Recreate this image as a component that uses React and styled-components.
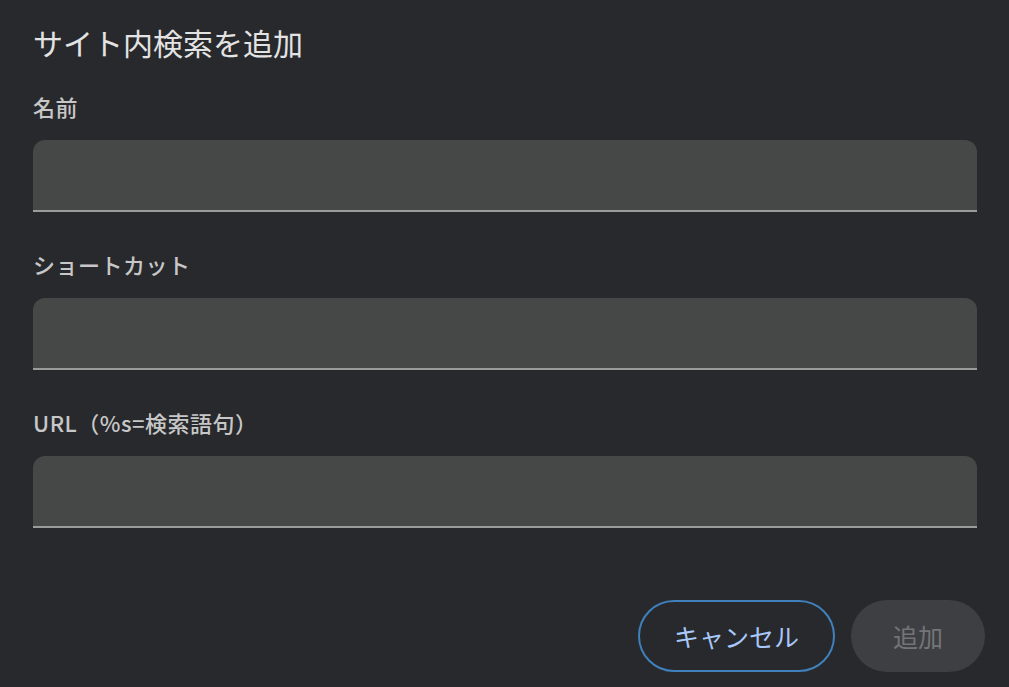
import React from "react";
import styled, { createGlobalStyle } from "styled-components";

const GlobalStyle = createGlobalStyle`
  html, body {
    margin: 0;
    padding: 0;
    background: #28292c;
  }
  body {
    font-family: "Noto Sans CJK JP", "Noto Sans", "Liberation Sans", sans-serif;
  }
`;

const Dialog = styled.div`
  width: 1009px;
  height: 687px;
  box-sizing: border-box;
  padding: 24px 24px 0 33px;
  background: #28292c;
  display: flex;
  flex-direction: column;
`;

const Title = styled.h1`
  margin: 0 0 32px;
  font-size: 30px;
  line-height: 36px;
  font-weight: 400;
  color: #e3e3e3;
`;

const Field = styled.div`
  display: flex;
  flex-direction: column;
  gap: 20px;
  margin-right: 8px;
  margin-bottom: ${(p) => (p.last ? "72px" : "38px")};
`;

const Label = styled.label`
  font-size: 22px;
  line-height: 28px;
  font-weight: 500;
  letter-spacing: 0.5px;
  color: #c7c7c7;
`;

const Input = styled.input`
  height: 72px;
  box-sizing: border-box;
  border: none;
  border-bottom: 2px solid #9a9b9b;
  border-radius: 12px 12px 0 0;
  background: #464847;
  color: #e3e3e3;
  font-size: 22px;
  padding: 0 16px;
  outline: none;
`;

const Footer = styled.div`
  display: flex;
  justify-content: flex-end;
  gap: 16px;
`;

const Button = styled.button`
  height: 72px;
  box-sizing: border-box;
  border-radius: 36px;
  font-family: inherit;
  font-size: 25px;
  font-weight: 400;
  padding: 0 ${(p) => (p.primary ? "41px" : "33px")};
  border: ${(p) => (p.primary ? "none" : "2px solid #3f80bd")};
  background: ${(p) => (p.primary ? "#3e3f42" : "transparent")};
  color: ${(p) => (p.primary ? "#737477" : "#a8c7fa")};
  min-width: ${(p) => (p.primary ? "134px" : "197px")};
`;

export default function App() {
  return (
    <>
      <GlobalStyle />
      <Dialog>
        <Title>サイト内検索を追加</Title>
        <Field>
          <Label>名前</Label>
          <Input />
        </Field>
        <Field>
          <Label>ショートカット</Label>
          <Input />
        </Field>
        <Field last>
          <Label>URL（%s=検索語句）</Label>
          <Input />
        </Field>
        <Footer>
          <Button>キャンセル</Button>
          <Button primary disabled>
            追加
          </Button>
        </Footer>
      </Dialog>
    </>
  );
}
